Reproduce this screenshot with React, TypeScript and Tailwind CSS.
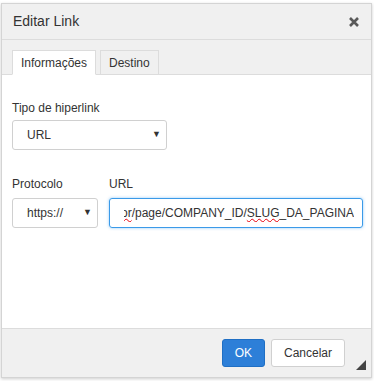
import React from 'react';

const App = () => {
  return (
    <div className="w-[374px] h-[381px] bg-white pt-[3px] pl-[1px] pr-[2px] pb-[3px]" style={{ fontFamily: '"Liberation Sans", Arial, sans-serif' }}>
      <div className="flex flex-col h-full border border-[#d4d4d4] bg-white shadow-[0_1px_3px_rgba(0,0,0,0.2)] text-[#333]">
        {/* header */}
        <div className="flex items-center justify-between h-[36px] px-[11px] bg-[#f0f0f0] border-b border-[#dcdcdc]">
          <span className="text-[14px]">Editar Link</span>
          <svg width="12" height="12" viewBox="0 0 12 12">
            <path d="M2 2 L10 10 M10 2 L2 10" stroke="#595959" strokeWidth="2.6" strokeLinecap="butt" />
          </svg>
        </div>
        {/* tabs */}
        <div className="flex items-end gap-[4px] h-[35px] px-[10px] bg-[#f0f0f0] border-b border-[#dcdcdc]">
          <div className="h-[25px] -mb-px px-[8px] flex items-center bg-white border border-[#dcdcdc] border-b-white text-[12px]">
            Informações
          </div>
          <div className="h-[24px] px-[8px] flex items-center bg-[#f0f0f0] border border-[#dcdcdc] border-b-0 text-[12px]">
            Destino
          </div>
        </div>
        {/* body */}
        <div className="flex-1 bg-white px-[10px] pt-[26px] text-[12px]">
          <div className="leading-[14px] mb-[5px]">Tipo de hiperlink</div>
          <div className="w-[155px] h-[30px] flex items-center justify-between pl-[14px] pr-[5px] border border-[#d0d0d0] rounded-[3px]">
            <span>URL</span>
            <span className="text-[9px]">▼</span>
          </div>
          <div className="flex gap-[11px] mt-[27px]">
            <div>
              <div className="leading-[14px] mb-[7px]">Protocolo</div>
              <div className="w-[86px] h-[30px] flex items-center justify-between pl-[14px] pr-[5px] border border-[#d0d0d0] rounded-[3px]">
                <span>https://</span>
                <span className="text-[9px]">▼</span>
              </div>
            </div>
            <div>
              <div className="leading-[14px] mb-[7px]">URL</div>
              <div className="w-[254px] h-[30px] flex items-center border border-[#3b9ae8] rounded-[3px] shadow-[0_0_3px_rgba(33,150,243,0.5)]">
                <div className="flex-1 flex justify-end overflow-hidden whitespace-nowrap ml-[14px] mr-[8px]">
                  <span className="shrink-0">
                    edit<span className="underline decoration-wavy decoration-red-600 decoration-1">or</span>/page/COMPANY_ID/<span className="underline decoration-wavy decoration-red-600 decoration-1">SLUG</span>_DA_PAGINA
                  </span>
                </div>
              </div>
            </div>
          </div>
        </div>
        {/* footer */}
        <div className="relative flex items-center justify-end gap-[6px] h-[49px] pr-[26px] bg-[#f0f0f0] border-t border-[#dcdcdc]">
          <button className="h-[28px] px-[12px] rounded-[3px] bg-[#2d7fd8] border border-[#1f6fc4] text-white text-[12px]">OK</button>
          <button className="h-[28px] px-[12px] rounded-[3px] bg-white border border-[#d0d0d0] text-[#333] text-[12px]">Cancelar</button>
          <svg width="10" height="10" viewBox="0 0 10 10" className="absolute right-[5px] bottom-[7px]">
            <path d="M10 0 L10 10 L0 10 Z" fill="#444" />
          </svg>
        </div>
      </div>
    </div>
  );
};

export default App;
